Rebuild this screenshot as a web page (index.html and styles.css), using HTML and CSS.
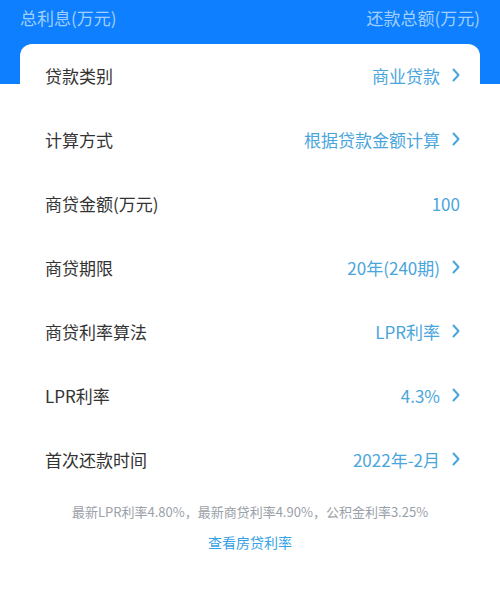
FILE: index.html
```html
<!DOCTYPE html>
<html lang="zh-CN">
<head>
<meta charset="utf-8">
<link rel="stylesheet" href="styles.css">
</head>
<body>
<div class="hero">
  <div class="hero-row">
    <span>总利息(万元)</span>
    <span>还款总额(万元)</span>
  </div>
</div>
<div class="card">
  <div class="row"><span class="label">贷款类别</span><span class="value">商业贷款<svg class="chev" viewBox="0 0 8 14"><path d="M1.5 1.5 L6.5 7 L1.5 12.5"/></svg></span></div>
  <div class="row"><span class="label">计算方式</span><span class="value">根据贷款金额计算<svg class="chev" viewBox="0 0 8 14"><path d="M1.5 1.5 L6.5 7 L1.5 12.5"/></svg></span></div>
  <div class="row"><span class="label">商贷金额(万元)</span><span class="value plain">100</span></div>
  <div class="row"><span class="label">商贷期限</span><span class="value">20年(240期)<svg class="chev" viewBox="0 0 8 14"><path d="M1.5 1.5 L6.5 7 L1.5 12.5"/></svg></span></div>
  <div class="row"><span class="label">商贷利率算法</span><span class="value">LPR利率<svg class="chev" viewBox="0 0 8 14"><path d="M1.5 1.5 L6.5 7 L1.5 12.5"/></svg></span></div>
  <div class="row"><span class="label">LPR利率</span><span class="value">4.3%<svg class="chev" viewBox="0 0 8 14"><path d="M1.5 1.5 L6.5 7 L1.5 12.5"/></svg></span></div>
  <div class="row"><span class="label">首次还款时间</span><span class="value">2022年-2月<svg class="chev" viewBox="0 0 8 14"><path d="M1.5 1.5 L6.5 7 L1.5 12.5"/></svg></span></div>
</div>
<div class="footer">
  <div class="note">最新LPR利率4.80%，最新商贷利率4.90%，公积金利率3.25%</div>
  <div class="link">查看房贷利率</div>
</div>
</body>
</html>
```
FILE: styles.css
```css
* { box-sizing: border-box; }
html, body { margin: 0; padding: 0; }
body {
  width: 500px;
  height: 602px;
  overflow: hidden;
  background: #ffffff;
  font-family: "Noto Sans CJK SC", "Noto Sans", sans-serif;
}
.hero {
  background: #0e7ffe;
  height: 84px;
  padding: 6px 20px 0 20px;
}
.hero-row {
  display: flex;
  justify-content: space-between;
  color: #9fcfff;
  font-size: 17px;
  line-height: 24px;
}
.card {
  background: #ffffff;
  margin: -40px 20px 0 20px;
  border-radius: 12px 12px 0 0;
  padding: 0 20px 0 25px;
}
.row {
  height: 64px;
  display: flex;
  align-items: center;
  justify-content: space-between;
  padding-bottom: 2px;
}
.label {
  font-size: 17px;
  color: #333333;
}
.value {
  display: flex;
  align-items: center;
  font-size: 17px;
  color: #4aa5dd;
}
.chev {
  width: 8px;
  height: 14px;
  margin-left: 12px;
  fill: none;
  stroke: #4aa5dd;
  stroke-width: 2;
  stroke-linecap: round;
  stroke-linejoin: round;
}
.footer {
  text-align: center;
  padding-top: 11px;
}
.note {
  font-size: 13px;
  color: #9aa1a8;
  line-height: 18px;
}
.link {
  margin-top: 11px;
  font-size: 14px;
  color: #36a2e6;
  line-height: 20px;
}
```
